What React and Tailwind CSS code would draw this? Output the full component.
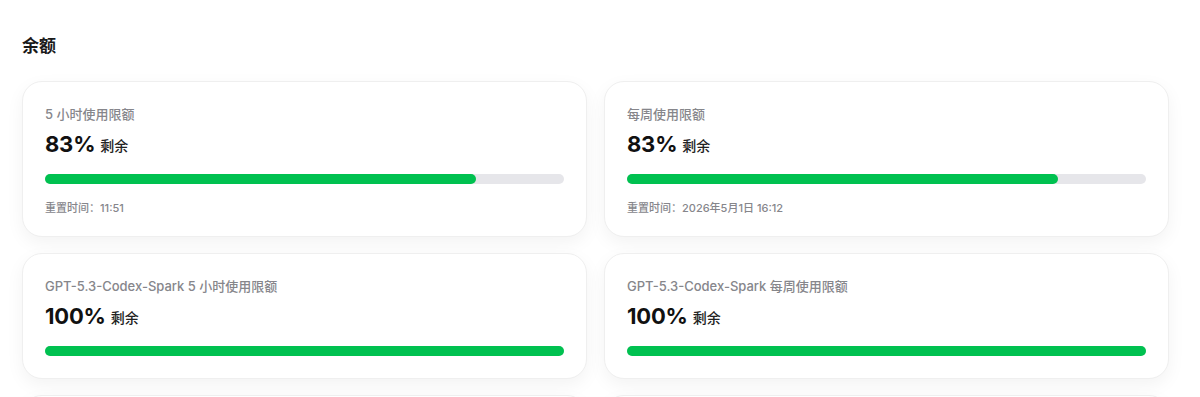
import React from "react";

const font = { fontFamily: 'Inter, "Noto Sans CJK SC", sans-serif' };

function Card({ label, pct, reset }) {
  return (
    <div className="rounded-[20px] border border-[#efefef] bg-white px-[22px] pt-[23px] pb-[22px] shadow-[0_6px_18px_rgba(0,0,0,0.05)]">
      <div className="text-[13px] font-medium leading-[18px] text-[#86868b]">{label}</div>
      <div className="mt-[7px] flex h-[28px] items-center gap-[5px]">
        <span className="text-[22px] font-bold leading-[28px] tracking-[-0.2px] text-[#111]">{pct}%</span>
        <span className="mt-[3px] text-[14px] font-medium leading-[20px] text-[#222]">剩余</span>
      </div>
      <div className="mt-[16px] h-[10px] w-full rounded-full bg-[#e6e6ea]">
        <div className="h-full rounded-full bg-[#00c150]" style={{ width: `${pct}%` }} />
      </div>
      {reset && (
        <div className="mt-[17px] -mb-[1px] text-[11px] font-medium leading-[14px] text-[#86868b]">{reset}</div>
      )}
    </div>
  );
}

export default function App() {
  return (
    <div className="h-[397px] overflow-hidden bg-white pl-[22px] pr-[31px] pt-[36px]" style={font}>
      <h2 className="text-[17px] font-semibold leading-[20px] text-[#1a1a1a]">余额</h2>
      <div className="mt-[25px] grid grid-cols-2 items-start gap-x-[17px] gap-y-[16px]">
        <Card label="5 小时使用限额" pct={83} reset="重置时间：11:51" />
        <Card label="每周使用限额" pct={83} reset="重置时间：2026年5月1日 16:12" />
        <Card label="GPT-5.3-Codex-Spark 5 小时使用限额" pct={100} />
        <Card label="GPT-5.3-Codex-Spark 每周使用限额" pct={100} />
        <div className="h-[125px] rounded-[20px] border border-[#efefef] bg-white shadow-[0_6px_18px_rgba(0,0,0,0.05)]" />
        <div className="h-[125px] rounded-[20px] border border-[#efefef] bg-white shadow-[0_6px_18px_rgba(0,0,0,0.05)]" />
      </div>
    </div>
  );
}
